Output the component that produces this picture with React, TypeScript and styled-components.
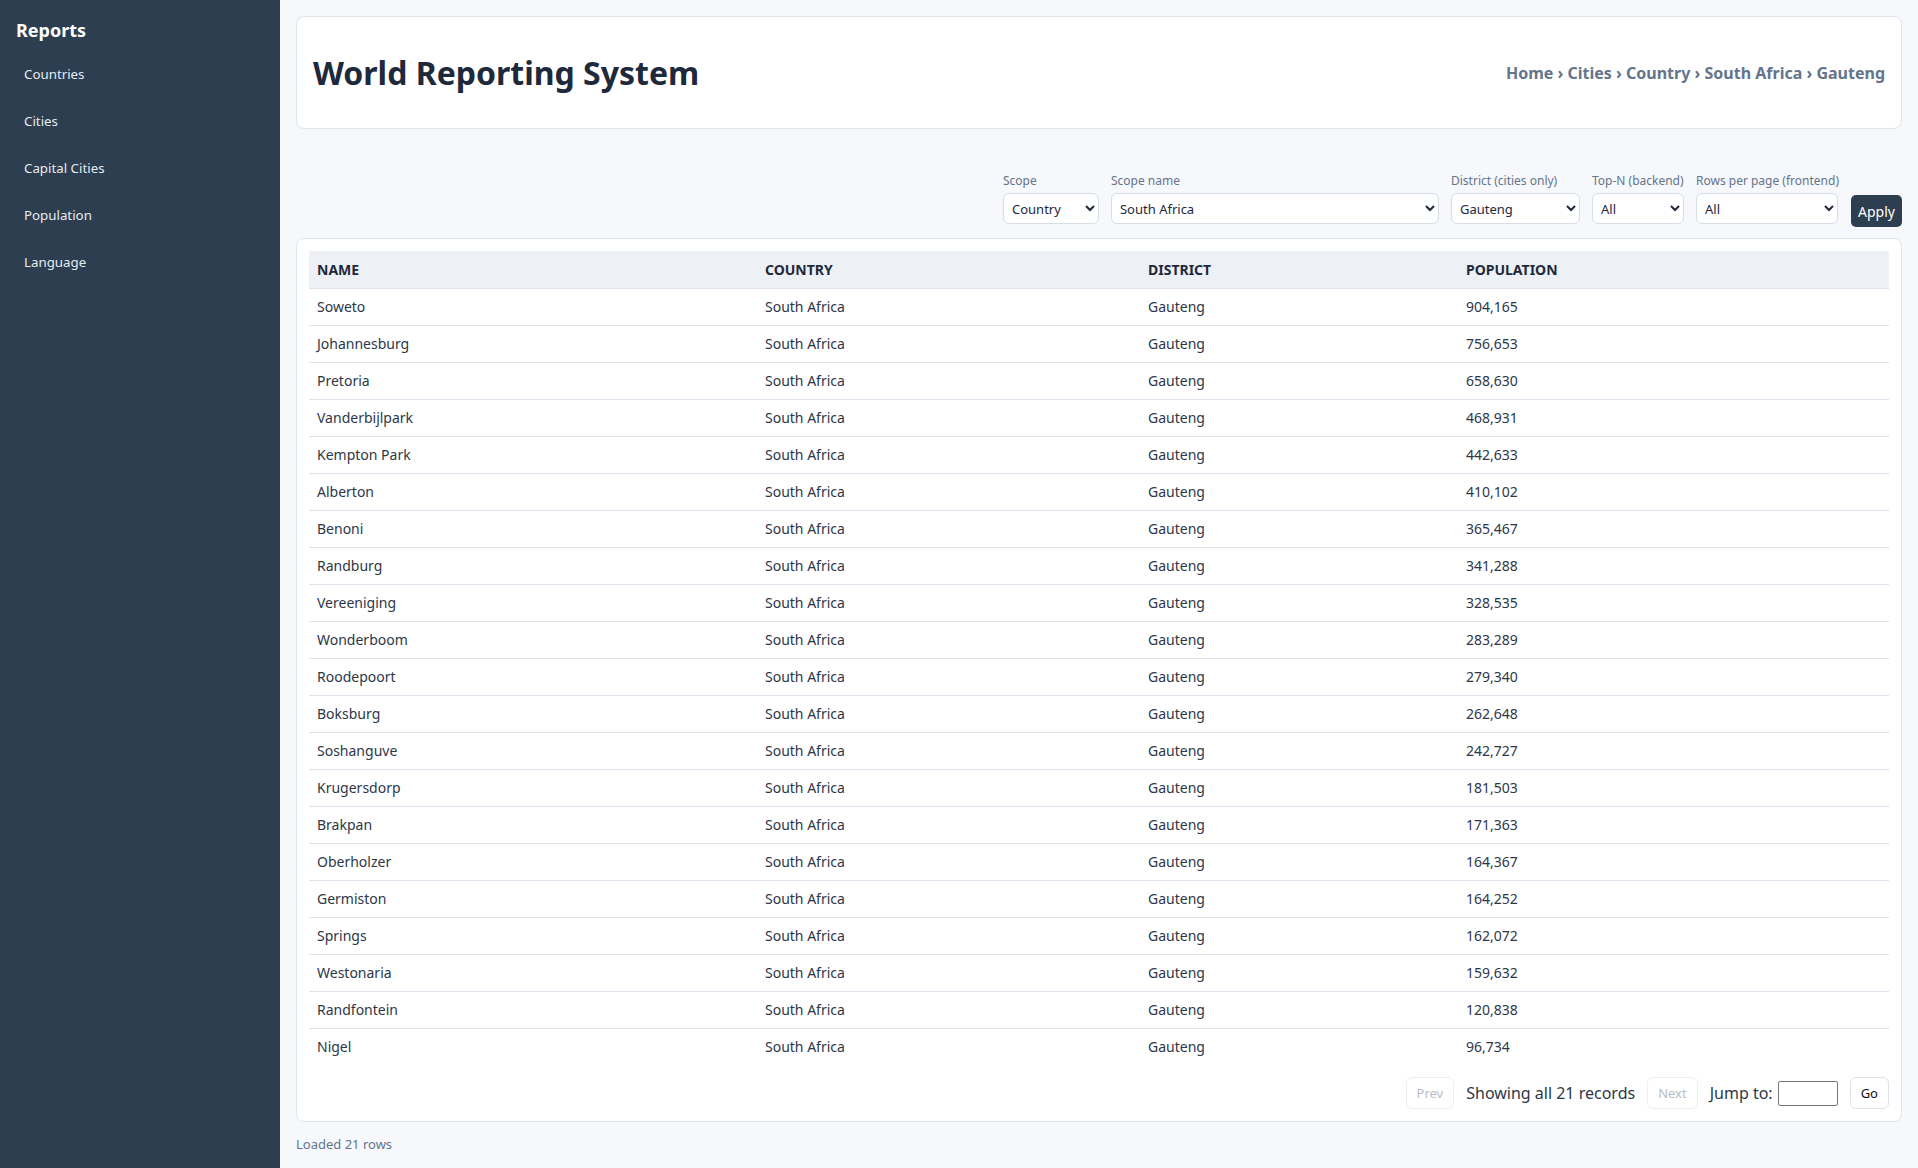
import React from "react";
import styled, { createGlobalStyle } from "styled-components";

const GlobalStyle = createGlobalStyle`
  html, body { margin: 0; padding: 0; }
  body {
    background: #f6f8fb;
    font-family: "Noto Sans", "Open Sans", sans-serif;
    color: #1e293b;
  }
  * { box-sizing: border-box; }
`;

const Layout = styled.div`
  display: grid;
  grid-template-columns: 280px 1fr;
  min-height: 1168px;
`;

const Sidebar = styled.aside`
  background: #2c3e50;
  padding: 16px;
  display: flex;
  flex-direction: column;
`;

const Brand = styled.div`
  color: #ffffff;
  font-size: 18px;
  font-weight: 700;
  line-height: 28px;
`;

const Nav = styled.nav`
  display: flex;
  flex-direction: column;
  margin-top: 7px;
`;

const NavLink = styled.a`
  display: block;
  color: #e6ebf0;
  font-size: 13.3px;
  height: 47px;
  line-height: 47px;
  padding: 0 8px;
  text-decoration: none;
`;

const Main = styled.main`
  padding: 16px;
  display: flex;
  flex-direction: column;
`;

const HeaderCard = styled.header`
  background: #ffffff;
  border: 1px solid #dfe5ec;
  border-radius: 8px;
  height: 113px;
  padding: 0 16px;
  display: flex;
  align-items: center;
  justify-content: space-between;
`;

const Title = styled.h1`
  margin: 0;
  font-size: 32px;
  font-weight: 700;
  color: #1e293b;
`;

const Breadcrumb = styled.div`
  font-size: 16px;
  font-weight: 700;
  color: #64748b;
`;

const FilterBar = styled.form`
  margin-top: 44px;
  display: flex;
  justify-content: flex-end;
  align-items: flex-end;
  gap: 12px;
`;

const Field = styled.label`
  display: flex;
  flex-direction: column;
  gap: 4px;
`;

const FieldLabel = styled.span`
  font-size: 12px;
  line-height: 16px;
  color: #64748b;
`;

const Select = styled.select<{ $w: number }>`
  width: ${(p) => p.$w}px;
  height: 31px;
  padding: 0 4px;
  font-family: "Noto Sans", sans-serif;
  font-size: 13px;
  color: #1e293b;
  background: #ffffff;
  border: 1px solid #d5dde6;
  border-radius: 6px;
`;

const ApplyButton = styled.button`
  height: 32px;
  width: 51px;
  margin-bottom: -3px;
  padding: 0;
  background: #2c3e50;
  color: #ffffff;
  border: none;
  border-radius: 5px;
  font-family: "Noto Sans", sans-serif;
  font-size: 14px;
`;

const TableCard = styled.section`
  margin-top: 14px;
  background: #ffffff;
  border: 1px solid #dfe5ec;
  border-radius: 8px;
  padding: 12px;
`;

const Table = styled.table`
  width: 100%;
  border-collapse: collapse;
  table-layout: fixed;
`;

const Th = styled.th`
  background: #edf1f6;
  text-align: left;
  font-size: 14px;
  font-weight: 700;
  text-transform: uppercase;
  color: #1e293b;
  height: 37px;
  padding: 0 8px;
  border-bottom: 1px solid #dbe3ec;
`;

const Td = styled.td`
  font-size: 14px;
  color: #2d3748;
  height: 37px;
  padding: 0 8px;
  border-bottom: 1px solid #dbe3ec;
`;

const LastRow = styled.tr`
  & > td { border-bottom: none; }
`;

const Pager = styled.div`
  margin-top: 12px;
  display: flex;
  justify-content: flex-end;
  align-items: center;
  gap: 12px;
`;

const PageButton = styled.button<{ $disabled?: boolean }>`
  height: 32px;
  padding: 0 10px;
  background: #ffffff;
  border: 1px solid ${(p) => (p.$disabled ? "#eceff3" : "#dde3ea")};
  border-radius: 6px;
  color: ${(p) => (p.$disabled ? "#b8bec8" : "#111111")};
  font-family: "Noto Sans", sans-serif;
  font-size: 13px;
`;

const PagerText = styled.span`
  font-size: 16px;
  color: #2d3748;
`;

const Jump = styled.label`
  display: flex;
  align-items: center;
  gap: 5px;
  font-size: 16px;
  color: #2d3748;
`;

const JumpInput = styled.input`
  width: 60px;
  height: 25px;
  border: 1px solid #767676;
  border-radius: 2px;
  font-size: 13px;
`;

const Footer = styled.div`
  margin-top: 13px;
  font-size: 13px;
  color: #64748b;
`;

const rows: [string, string][] = [
  ["Soweto", "904,165"],
  ["Johannesburg", "756,653"],
  ["Pretoria", "658,630"],
  ["Vanderbijlpark", "468,931"],
  ["Kempton Park", "442,633"],
  ["Alberton", "410,102"],
  ["Benoni", "365,467"],
  ["Randburg", "341,288"],
  ["Vereeniging", "328,535"],
  ["Wonderboom", "283,289"],
  ["Roodepoort", "279,340"],
  ["Boksburg", "262,648"],
  ["Soshanguve", "242,727"],
  ["Krugersdorp", "181,503"],
  ["Brakpan", "171,363"],
  ["Oberholzer", "164,367"],
  ["Germiston", "164,252"],
  ["Springs", "162,072"],
  ["Westonaria", "159,632"],
  ["Randfontein", "120,838"],
  ["Nigel", "96,734"],
];

export default function App() {
  return (
    <>
      <GlobalStyle />
      <Layout>
        <Sidebar>
          <Brand>Reports</Brand>
          <Nav>
            <NavLink href="#">Countries</NavLink>
            <NavLink href="#">Cities</NavLink>
            <NavLink href="#">Capital Cities</NavLink>
            <NavLink href="#">Population</NavLink>
            <NavLink href="#">Language</NavLink>
          </Nav>
        </Sidebar>
        <Main>
          <HeaderCard>
            <Title>World Reporting System</Title>
            <Breadcrumb>Home › Cities › Country › South Africa › Gauteng</Breadcrumb>
          </HeaderCard>
          <FilterBar onSubmit={(e) => e.preventDefault()}>
            <Field>
              <FieldLabel>Scope</FieldLabel>
              <Select $w={96} defaultValue="Country">
                <option>Country</option>
              </Select>
            </Field>
            <Field>
              <FieldLabel>Scope name</FieldLabel>
              <Select $w={328} defaultValue="South Africa">
                <option>South Africa</option>
              </Select>
            </Field>
            <Field>
              <FieldLabel>District (cities only)</FieldLabel>
              <Select $w={129} defaultValue="Gauteng">
                <option>Gauteng</option>
              </Select>
            </Field>
            <Field>
              <FieldLabel>Top-N (backend)</FieldLabel>
              <Select $w={92} defaultValue="All">
                <option>All</option>
              </Select>
            </Field>
            <Field>
              <FieldLabel>Rows per page (frontend)</FieldLabel>
              <Select $w={142} defaultValue="All">
                <option>All</option>
              </Select>
            </Field>
            <ApplyButton type="submit">Apply</ApplyButton>
          </FilterBar>
          <TableCard>
            <Table>
              <colgroup>
                <col style={{ width: 448 }} />
                <col style={{ width: 383 }} />
                <col style={{ width: 318 }} />
                <col />
              </colgroup>
              <thead>
                <tr>
                  <Th>Name</Th>
                  <Th>Country</Th>
                  <Th>District</Th>
                  <Th>Population</Th>
                </tr>
              </thead>
              <tbody>
                {rows.map(([name, pop], i) => {
                  const cells = (
                    <>
                      <Td>{name}</Td>
                      <Td>South Africa</Td>
                      <Td>Gauteng</Td>
                      <Td>{pop}</Td>
                    </>
                  );
                  return i === rows.length - 1 ? (
                    <LastRow key={name}>{cells}</LastRow>
                  ) : (
                    <tr key={name}>{cells}</tr>
                  );
                })}
              </tbody>
            </Table>
            <Pager>
              <PageButton $disabled disabled>Prev</PageButton>
              <PagerText>Showing all 21 records</PagerText>
              <PageButton $disabled disabled>Next</PageButton>
              <Jump>
                Jump to:
                <JumpInput type="number" min={1} max={1} />
              </Jump>
              <PageButton>Go</PageButton>
            </Pager>
          </TableCard>
          <Footer>Loaded 21 rows</Footer>
        </Main>
      </Layout>
    </>
  );
}
